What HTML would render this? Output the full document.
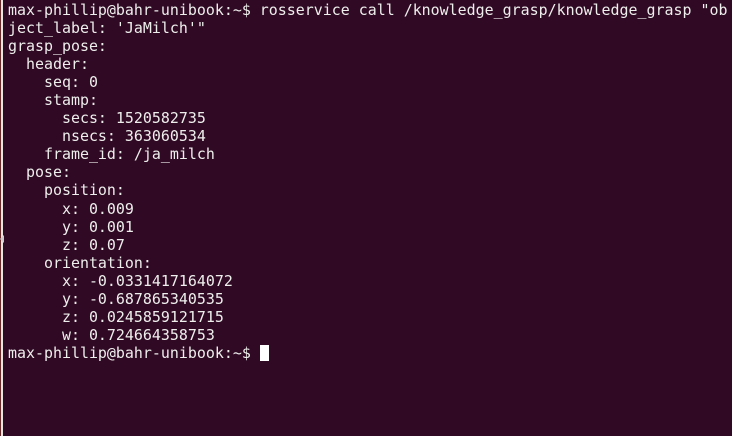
<!DOCTYPE html>
<html><head><meta charset="utf-8"><style>
html,body{margin:0;padding:0;}
body{width:732px;height:436px;background:#300a24;overflow:hidden;position:relative;}
.l0{position:absolute;left:0;top:0;width:1px;height:436px;background:#6a2a2a;}
.l1{position:absolute;left:1px;top:0;width:2px;height:436px;background:#e8e6e3;}
.arrow{position:absolute;left:0;top:235px;width:0;height:0;border-top:4px solid transparent;border-bottom:4px solid transparent;border-right:4px solid #ccc;}
pre{position:absolute;left:8px;top:1px;margin:0;font-family:"DejaVu Sans Mono","Liberation Mono",monospace;font-size:14.94px;line-height:18.05px;color:#eeeeec;}
.cur{display:inline-block;width:9px;height:16px;background:#fff;vertical-align:-3px;}
</style></head><body>
<div class="l0"></div><div class="l1"></div><div class="arrow"></div>
<pre>max-phillip@bahr-unibook:~$ rosservice call /knowledge_grasp/knowledge_grasp "ob
ject_label: 'JaMilch'"
grasp_pose: 
  header: 
    seq: 0
    stamp: 
      secs: 1520582735
      nsecs: 363060534
    frame_id: /ja_milch
  pose: 
    position: 
      x: 0.009
      y: 0.001
      z: 0.07
    orientation: 
      x: -0.0331417164072
      y: -0.687865340535
      z: 0.0245859121715
      w: 0.724664358753
max-phillip@bahr-unibook:~$ <span class="cur"></span></pre>
</body></html>
